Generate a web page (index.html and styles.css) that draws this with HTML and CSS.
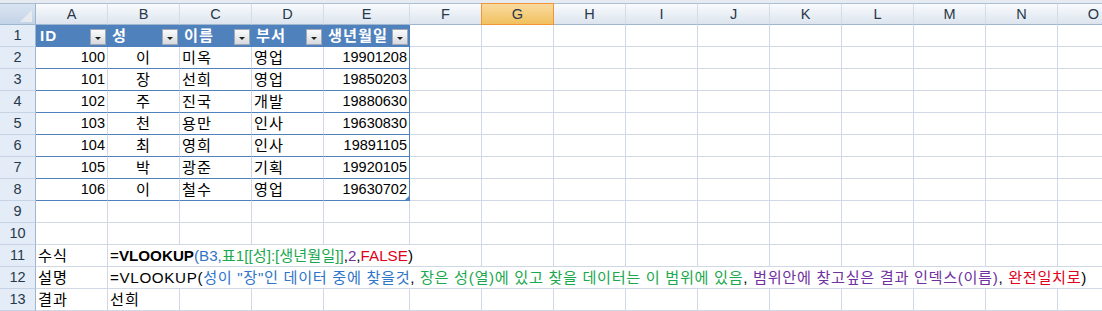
FILE: index.html
```html
<!DOCTYPE html>
<html lang="ko">

<head>
    <meta charset="UTF-8">
    <meta name="viewport" content="width=device-width, initial-scale=1.0">
    <title>VLOOKUP 예제</title>
    <link rel="stylesheet" href="styles.css">
</head>

<body>

    <div class="topbar"></div>

    <div class="sheet">
        <!-- column headers -->
        <div class="corner"></div>
        <div class="ch">A</div><div class="ch">B</div><div class="ch">C</div><div class="ch">D</div><div class="ch">E</div>
        <div class="ch">F</div><div class="ch sel">G</div><div class="ch">H</div><div class="ch">I</div><div class="ch">J</div>
        <div class="ch">K</div><div class="ch">L</div><div class="ch">M</div><div class="ch">N</div><div class="ch">O</div>

        <!-- row 1 : table header -->
        <div class="rh">1</div>
        <div class="c th"><span>ID</span><i class="drop"></i></div>
        <div class="c th"><span>성</span><i class="drop"></i></div>
        <div class="c th"><span>이름</span><i class="drop"></i></div>
        <div class="c th"><span>부서</span><i class="drop"></i></div>
        <div class="c th e"><span>생년월일</span><i class="drop"></i></div>
        <div class="c"></div><div class="c"></div><div class="c"></div><div class="c"></div><div class="c"></div><div class="c"></div><div class="c"></div><div class="c"></div><div class="c"></div><div class="c"></div>

        <div class="rh">2</div>
        <div class="c t num">100</div><div class="c t ctr">이</div><div class="c t">미옥</div><div class="c t">영업</div><div class="c t e num">19901208</div>
        <div class="c"></div><div class="c"></div><div class="c"></div><div class="c"></div><div class="c"></div><div class="c"></div><div class="c"></div><div class="c"></div><div class="c"></div><div class="c"></div>

        <div class="rh">3</div>
        <div class="c t num">101</div><div class="c t ctr">장</div><div class="c t">선희</div><div class="c t">영업</div><div class="c t e num">19850203</div>
        <div class="c"></div><div class="c"></div><div class="c"></div><div class="c"></div><div class="c"></div><div class="c"></div><div class="c"></div><div class="c"></div><div class="c"></div><div class="c"></div>

        <div class="rh">4</div>
        <div class="c t num">102</div><div class="c t ctr">주</div><div class="c t">진국</div><div class="c t">개발</div><div class="c t e num">19880630</div>
        <div class="c"></div><div class="c"></div><div class="c"></div><div class="c"></div><div class="c"></div><div class="c"></div><div class="c"></div><div class="c"></div><div class="c"></div><div class="c"></div>

        <div class="rh">5</div>
        <div class="c t num">103</div><div class="c t ctr">천</div><div class="c t">용만</div><div class="c t">인사</div><div class="c t e num">19630830</div>
        <div class="c"></div><div class="c"></div><div class="c"></div><div class="c"></div><div class="c"></div><div class="c"></div><div class="c"></div><div class="c"></div><div class="c"></div><div class="c"></div>

        <div class="rh">6</div>
        <div class="c t num">104</div><div class="c t ctr">최</div><div class="c t">영희</div><div class="c t">인사</div><div class="c t e num">19891105</div>
        <div class="c"></div><div class="c"></div><div class="c"></div><div class="c"></div><div class="c"></div><div class="c"></div><div class="c"></div><div class="c"></div><div class="c"></div><div class="c"></div>

        <div class="rh">7</div>
        <div class="c t num">105</div><div class="c t ctr">박</div><div class="c t">광준</div><div class="c t">기획</div><div class="c t e num">19920105</div>
        <div class="c"></div><div class="c"></div><div class="c"></div><div class="c"></div><div class="c"></div><div class="c"></div><div class="c"></div><div class="c"></div><div class="c"></div><div class="c"></div>

        <div class="rh">8</div>
        <div class="c t num">106</div><div class="c t ctr">이</div><div class="c t">철수</div><div class="c t">영업</div><div class="c t e num last">19630702</div>
        <div class="c"></div><div class="c"></div><div class="c"></div><div class="c"></div><div class="c"></div><div class="c"></div><div class="c"></div><div class="c"></div><div class="c"></div><div class="c"></div>

        <div class="rh">9</div>
        <div class="c"></div><div class="c"></div><div class="c"></div><div class="c"></div><div class="c"></div>
        <div class="c"></div><div class="c"></div><div class="c"></div><div class="c"></div><div class="c"></div><div class="c"></div><div class="c"></div><div class="c"></div><div class="c"></div><div class="c"></div>

        <div class="rh">10</div>
        <div class="c"></div><div class="c"></div><div class="c"></div><div class="c"></div><div class="c"></div>
        <div class="c"></div><div class="c"></div><div class="c"></div><div class="c"></div><div class="c"></div><div class="c"></div><div class="c"></div><div class="c"></div><div class="c"></div><div class="c"></div>

        <!-- row 11 : formula, text runs over B..F -->
        <div class="rh">11</div>
        <div class="c">수식</div>
        <div class="c span5">=<b>VLOOKUP</b><span class="blue">(B3,</span><span class="green">표1[[성]:[생년월일]]</span>,<span class="purple">2</span>,<span class="red">FALSE</span>)</div>
        <div class="c"></div><div class="c"></div><div class="c"></div><div class="c"></div><div class="c"></div><div class="c"></div><div class="c"></div><div class="c"></div><div class="c"></div>

        <!-- row 12 : explanation, runs to the edge -->
        <div class="rh">12</div>
        <div class="c">설명</div>
        <div class="c span14">=VLOOKUP(<span class="blue">성이 "장"인 데이터 중에 찾을것</span>, <span class="green">장은 성(열)에 있고 찾을 데이터는 이 범위에 있음</span>, <span class="purple">범위안에 찾고싶은 결과 인덱스(이름)</span>, <span class="red">완전일치로</span>)</div>

        <div class="rh">13</div>
        <div class="c">결과</div>
        <div class="c">선희</div>
        <div class="c"></div><div class="c"></div><div class="c"></div><div class="c"></div><div class="c"></div><div class="c"></div><div class="c"></div><div class="c"></div><div class="c"></div><div class="c"></div><div class="c"></div><div class="c"></div><div class="c"></div>
    </div>

</body>

</html>
```

FILE: styles.css
```css
body {
    margin: 0;
    padding: 0;
    background-color: #fff;
    overflow: hidden;
    font-family: "Liberation Sans", "Noto Sans CJK KR", sans-serif;
    font-size: 15.2px;
    color: #000;
}

* {
    box-sizing: border-box;
}

.topbar {
    height: 3px;
    background-color: #e6ebf1;
}

.sheet {
    display: grid;
    grid-template-columns: 36px 72px 72px 72px 72px 86px repeat(10, 72px);
    grid-auto-rows: 22px;
    width: 1130px;
}

/* headers */
.corner {
    position: relative;
    background: linear-gradient(#d9e4f1, #c3d3e7);
    border-top: 1px solid #abbdd3;
    border-right: 1px solid #9eb6ce;
    border-bottom: 1px solid #9eb6ce;
}

.corner::after {
    content: "";
    position: absolute;
    right: 3px;
    bottom: 2px;
    border-left: 12px solid transparent;
    border-bottom: 12px solid #e7ebf0;
}

.ch {
    background: linear-gradient(#f9fbfd, #dce4ee);
    border-top: 1px solid #abbdd3;
    border-right: 1px solid #d3dce8;
    border-bottom: 1px solid #9eb6ce;
    text-align: center;
    font-size: 14.5px;
    line-height: 20px;
    color: #27384b;
}

.ch.sel {
    background: linear-gradient(#f9da9f, #f1c15f);
    border-top-color: #f29536;
    border-right-color: #f29536;
    border-bottom-color: #f29536;
    box-shadow: -1px 0 0 #f29536;
}

.rh {
    background-color: #e4ecf7;
    border-right: 1px solid #9eb6ce;
    border-bottom: 1px solid #c5d3e4;
    text-align: center;
    font-size: 14.5px;
    line-height: 21px;
    color: #27384b;
}

/* cells */
.c {
    border-right: 1px solid #d0d7e5;
    border-bottom: 1px solid #d0d7e5;
    padding: 0 2px;
    line-height: 21px;
    letter-spacing: 1px;
    white-space: nowrap;
}

.num {
    text-align: right;
    font-size: 14.5px;
    letter-spacing: 0;
}

.ctr {
    text-align: center;
}

.span5 {
    grid-column: span 5;
    letter-spacing: 0;
}

.span14 {
    grid-column: span 14;
    letter-spacing: 0.65px;
}

/* excel table */
.th {
    display: flex;
    justify-content: space-between;
    background-color: #4f81bd;
    border-right-color: #4f81bd;
    border-bottom-color: #4f81bd;
    color: white;
    font-weight: bold;
    padding: 0 1px 0 4px;
}

.drop {
    align-self: flex-end;
    display: flex;
    align-items: center;
    justify-content: center;
    width: 16px;
    height: 16px;
    margin-bottom: 1px;
    border: 1px solid #9fa8b4;
    background: linear-gradient(#fbfbfb, #d6d9de);
}

.drop::after {
    content: "";
    margin-top: 2px;
    border-left: 3px solid transparent;
    border-right: 3px solid transparent;
    border-top: 3px solid #222;
}

.t {
    border-bottom-color: #4f81bd;
}

.e {
    border-right-color: #4f81bd;
}

.last {
    position: relative;
}

.last::after {
    content: "";
    position: absolute;
    right: 0;
    bottom: 0;
    border-left: 4px solid transparent;
    border-bottom: 4px solid #4f81bd;
}

/* formula colours */
.blue {
    color: #2f75c8;
}

.green {
    color: #1ba84e;
}

.purple {
    color: #7030a0;
}

.red {
    color: #e0001b;
}
```
